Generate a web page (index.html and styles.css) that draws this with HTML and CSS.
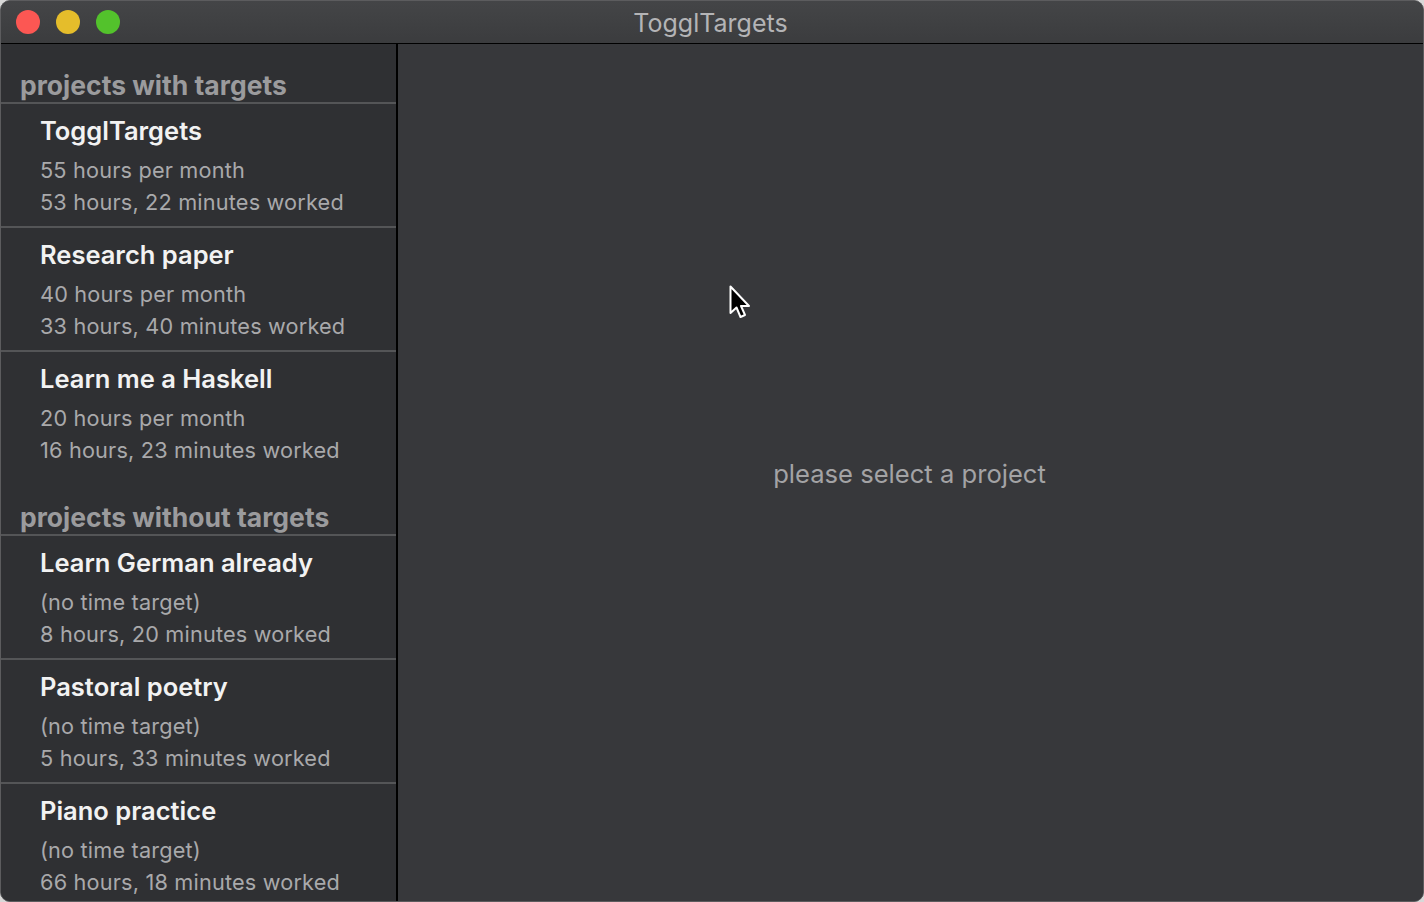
FILE: index.html
```html
<!DOCTYPE html>
<html>
<head>
<meta charset="utf-8">
<link rel="stylesheet" href="styles.css">
</head>
<body>
<div class="window">
  <div class="titlebar">
    <div class="lights">
      <span class="light red"></span>
      <span class="light yellow"></span>
      <span class="light green"></span>
    </div>
    <div class="wtitle">TogglTargets</div>
  </div>
  <div class="content">
    <div class="sidebar">
      <div class="group">projects with targets</div>
      <div class="row">
        <div class="name">TogglTargets</div>
        <div class="sub">55 hours per month</div>
        <div class="sub">53 hours, 22 minutes worked</div>
      </div>
      <div class="row">
        <div class="name">Research paper</div>
        <div class="sub">40 hours per month</div>
        <div class="sub">33 hours, 40 minutes worked</div>
      </div>
      <div class="row last">
        <div class="name">Learn me a Haskell</div>
        <div class="sub">20 hours per month</div>
        <div class="sub">16 hours, 23 minutes worked</div>
      </div>
      <div class="group g2">projects without targets</div>
      <div class="row">
        <div class="name">Learn German already</div>
        <div class="sub">(no time target)</div>
        <div class="sub">8 hours, 20 minutes worked</div>
      </div>
      <div class="row">
        <div class="name">Pastoral poetry</div>
        <div class="sub">(no time target)</div>
        <div class="sub">5 hours, 33 minutes worked</div>
      </div>
      <div class="row last">
        <div class="name">Piano practice</div>
        <div class="sub">(no time target)</div>
        <div class="sub">66 hours, 18 minutes worked</div>
      </div>
    </div>
    <div class="main">
      <div class="placeholder">please select a project</div>
    </div>
  </div>
  <svg class="cursor" width="26" height="40" viewBox="0 0 26 40">
    <path d="M2.5 1.5 L2.5 28 L8.5 22.5 L12.5 32 L17 30 L13 21 L21 21 Z" fill="#000" stroke="#fff" stroke-width="2" stroke-linejoin="round"/>
  </svg>
</div>
</body>
</html>
```

FILE: styles.css
```css
html, body {
  margin: 0;
  padding: 0;
  background: #d8d8d8;
  width: 1424px;
  height: 902px;
  overflow: hidden;
}
.window {
  position: relative;
  width: 1424px;
  height: 902px;
  box-sizing: border-box;
  border-radius: 10px;
  overflow: hidden;
  border: 1px solid #5c5c5e;
  display: flex;
  flex-direction: column;
  font-family: Inter, "Liberation Sans", sans-serif;
  background: #37383b;
}
.titlebar {
  height: 42px;
  flex: none;
  position: relative;
  display: flex;
  align-items: center;
  justify-content: center;
  background: linear-gradient(#444547, #3b3c3e);
  border-bottom: 1px solid #000;
}
.lights {
  position: absolute;
  left: 15px;
  top: 9px;
  display: flex;
  gap: 16px;
}
.light {
  width: 24px;
  height: 24px;
  border-radius: 50%;
}
.red { background: #fc5753; }
.yellow { background: #e5bd2b; }
.green { background: #53c22c; }
.wtitle {
  color: #b4b4b6;
  font-size: 25px;
  margin-left: -3px;
  margin-top: 2px;
}
.content {
  flex: 1;
  display: flex;
  min-height: 0;
}
.sidebar {
  width: 395px;
  flex: none;
  background: #2f3033;
  border-right: 2px solid #000;
  overflow: hidden;
}
.group {
  height: 60px;
  box-sizing: border-box;
  padding: 0 0 1px 19px;
  display: flex;
  align-items: flex-end;
  color: #9b9b9d;
  font-size: 26.5px;
  font-weight: 700;
  line-height: 32px;
  border-bottom: 2px solid #545557;
}
.group.g2 { height: 62px; }
.row {
  height: 124px;
  box-sizing: border-box;
  padding: 12px 0 0 39px;
  border-bottom: 2px solid #545557;
}
.row.last { border-bottom: none; height: 122px; }
.name {
  color: #f2f2f2;
  font-size: 25.5px;
  font-weight: 600;
  line-height: 30px;
  margin-bottom: 8px;
}
.sub {
  color: #a9a9ab;
  font-size: 21.7px;
  line-height: 32px;
  letter-spacing: 0.18px;
}
.main {
  flex: 1;
  display: flex;
  align-items: center;
  justify-content: center;
  background: #37383b;
}
.placeholder {
  color: #a3a3a5;
  font-size: 25.6px;
  margin-top: 2px;
  margin-left: -2px;
}
.cursor {
  position: absolute;
  left: 727px;
  top: 284px;
}
```
